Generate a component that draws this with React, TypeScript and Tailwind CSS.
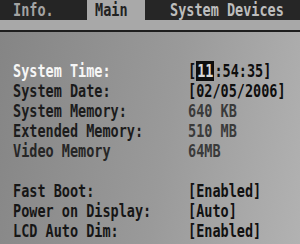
const font = "font-['DejaVu_Sans_Mono','Liberation_Mono',monospace]";

type Row = { label: string; value?: React.ReactNode; labelTone: string; valueTone: string };

const rows: (Row | null)[] = [
  {
    label: "System Time:",
    value: (
      <>
        [<span className="bg-[#0e0e0e] text-[#d8d8d8] px-px">11</span>:54:35]
      </>
    ),
    labelTone: "text-[#f6f6f6]",
    valueTone: "text-[#0e0e0e]",
  },
  { label: "System Date:", value: "[02/05/2006]", labelTone: "text-[#1a1a1a]", valueTone: "text-[#0e0e0e]" },
  { label: "System Memory:", value: "640 KB", labelTone: "text-[#1c1c1c]", valueTone: "text-[#3a3a3a]" },
  { label: "Extended Memory:", value: "510 MB", labelTone: "text-[#1c1c1c]", valueTone: "text-[#3a3a3a]" },
  { label: "Video Memory", value: "64MB", labelTone: "text-[#262626]", valueTone: "text-[#3a3a3a]" },
  null,
  { label: "Fast Boot:", value: "[Enabled]", labelTone: "text-[#161616]", valueTone: "text-[#111111]" },
  { label: "Power on Display:", value: "[Auto]", labelTone: "text-[#161616]", valueTone: "text-[#111111]" },
  { label: "LCD Auto Dim:", value: "[Enabled]", labelTone: "text-[#161616]", valueTone: "text-[#111111]" },
];

export default function App() {
  return (
    <div className={`w-[300px] h-[244px] overflow-hidden ${font} font-bold text-[13.5px] bg-[#a6a6a6]`}>
      <div className="flex h-[20px] leading-[20px]">
        <div className="w-[87px] bg-[#252525] pl-[13px] text-[#a3a3a3]">
          <span className="inline-block scale-y-125">Info.</span>
        </div>
        <div className="w-[58px] bg-[#a9a9a9] pl-[8px] text-[#222222]">
          <span className="inline-block scale-y-125">Main</span>
        </div>
        <div className="flex-1 bg-[#262626] pl-[25px] text-[#bdbdbd]">
          <span className="inline-block scale-y-125">System Devices</span>
        </div>
      </div>
      <div className="h-[10px] bg-[#a8a8a8]" />
      <div className="h-[2px] bg-[#1e1e1e]" />
      <div className="h-[212px] bg-[linear-gradient(100deg,#858585_0%,#9a9a9a_55%,#b2b2b2_100%)] pt-[29px] pl-[13px]">
        {rows.map((row, i) =>
          row ? (
            <div key={i} className="grid grid-cols-[175px_1fr] h-[20px] leading-[20px]">
              <span className={`inline-block scale-y-125 whitespace-nowrap ${row.labelTone}`}>{row.label}</span>
              <span className={`inline-block scale-y-125 whitespace-nowrap ${row.valueTone}`}>{row.value}</span>
            </div>
          ) : (
            <div key={i} className="h-[20px]" />
          ),
        )}
      </div>
    </div>
  );
}
